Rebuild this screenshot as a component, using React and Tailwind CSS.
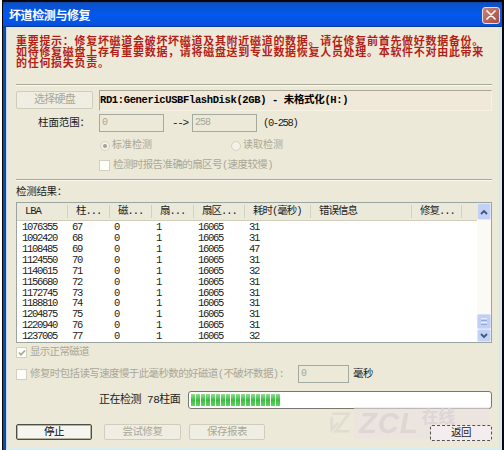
const columns = [
  { label: 'LBA', width: 'w-[51px]' },
  { label: '柱...', width: 'w-[42px]' },
  { label: '磁...', width: 'w-[42px]' },
  { label: '扇...', width: 'w-[42px]' },
  { label: '扇区...', width: 'w-[51px]' },
  { label: '耗时(毫秒)', width: 'w-[66px]' },
  { label: '错误信息', width: 'w-[101px]' },
  { label: '修复...', width: 'w-[50px]' },
]

const rows = [
  [1076355, 67, 0, 1, 16065, 31],
  [1092420, 68, 0, 1, 16065, 31],
  [1108485, 69, 0, 1, 16065, 47],
  [1124550, 70, 0, 1, 16065, 31],
  [1140615, 71, 0, 1, 16065, 32],
  [1156680, 72, 0, 1, 16065, 31],
  [1172745, 73, 0, 1, 16065, 31],
  [1188810, 74, 0, 1, 16065, 31],
  [1204875, 75, 0, 1, 16065, 31],
  [1220940, 76, 0, 1, 16065, 31],
  [1237005, 77, 0, 1, 16065, 32],
]

function TitleBar() {
  return (
    <div className="flex h-[24px] shrink-0 items-center justify-between rounded-t-[5px] bg-gradient-to-b from-[#0a50c8] via-[#0458ee] to-[#0450dc] pl-[6px] pr-[2px] shadow-[inset_0_-1px_0_#063a9c]">
      <span className="pt-[3px] text-[12px] font-bold leading-none tracking-[-0.4px] text-white">坏道检测与修复</span>
      <button className="flex h-[17px] w-[18px] items-center justify-center rounded-[3px] border border-[#e6dcec] bg-gradient-to-br from-[#c98378] to-[#a34e42]">
        <svg viewBox="0 0 10 10" className="h-[10px] w-[10px]" stroke="#fff6ee" strokeWidth="1.7" strokeLinecap="round">
          <path d="M1 1l8 8M9 1l-8 8" />
        </svg>
      </button>
    </div>
  )
}

function Divider() {
  return <div className="h-[2px] shrink-0 border-b border-t border-b-[#fbfaf2] border-t-[#aaa899]" />
}

function XpButton({ children, className }) {
  return (
    <button className={`flex shrink-0 items-center justify-center rounded-[2px] border ${className}`}>
      {children}
    </button>
  )
}

function Field({ children, className }) {
  return (
    <div className={`flex h-[18px] shrink-0 items-center border border-[#a3aaa0] pl-[2px] text-[#aaa797] ${className}`}>
      {children}
    </div>
  )
}

function Radio({ checked }) {
  return (
    <span className="flex h-[10px] w-[10px] shrink-0 items-center justify-center rounded-full border border-[#d6d2c2] bg-[#f4f2e8]">
      {checked && <span className="h-[4px] w-[4px] rounded-full bg-[#a5a294]" />}
    </span>
  )
}

function Checkbox({ checked }) {
  return (
    <span className="flex h-[11px] w-[11px] shrink-0 items-center justify-center border border-[#d3d0c0] bg-[#fdfdfa]">
      {checked && (
        <svg viewBox="0 0 8 8" className="h-[8px] w-[8px]" fill="none" stroke="#aaa799" strokeWidth="1.7">
          <path d="M1 3.5l2 2.3L7 1.5" />
        </svg>
      )}
    </span>
  )
}

function ScrollBar() {
  return (
    <div className="flex w-[14px] shrink-0 flex-col bg-[#fbfaf5]">
      <div className="flex h-[17px] items-center justify-center rounded-[2px] border border-[#dfe7fb] bg-[#c3d1f7]">
        <svg viewBox="0 0 8 6" className="h-[6px] w-[8px]" fill="none" stroke="#40557f" strokeWidth="1.8">
          <path d="M1 5l3-3 3 3" />
        </svg>
      </div>
      <div className="flex-1" />
      <div className="flex h-[15px] flex-col items-center justify-center gap-px rounded-[2px] border border-[#d4def8] bg-[#bfcff7]">
        <span className="h-px w-[6px] bg-[#e6edfd]" />
        <span className="h-px w-[6px] bg-[#93a9df]" />
        <span className="h-px w-[6px] bg-[#e6edfd]" />
        <span className="h-px w-[6px] bg-[#93a9df]" />
      </div>
      <div className="flex h-[13px] items-center justify-center rounded-[2px] border border-[#dfe7fb] bg-[#c3d1f7]">
        <svg viewBox="0 0 8 6" className="h-[6px] w-[8px]" fill="none" stroke="#40557f" strokeWidth="1.8">
          <path d="M1 1l3 3 3-3" />
        </svg>
      </div>
    </div>
  )
}

function ResultTable() {
  return (
    <div className="flex h-[141px] shrink-0 border border-[#9aa5a0] bg-white">
      <div className="flex min-w-0 flex-1 flex-col">
        <div className="mb-px flex h-[18px] shrink-0 items-center border-b border-[#d2cebb] bg-[#ebe9da]">
          {columns.map((col, i) => (
            <div
              key={i}
              className={`${col.width} flex h-[13px] shrink-0 items-center whitespace-nowrap border-r border-[#d3d0c0] pl-[8px] text-[10.5px]`}
            >
              {col.label}
            </div>
          ))}
        </div>
        {rows.map((row) => (
          <div key={row[0]} className="flex h-[10.9px] shrink-0 items-center">
            {row.map((cell, i) => (
              <div key={i} className={`${columns[i].width} shrink-0 text-[10.5px] tracking-[-1.3px] ${i ? 'pl-[4px]' : 'pl-[5px]'}`}>
                {cell}
              </div>
            ))}
          </div>
        ))}
      </div>
      <ScrollBar />
    </div>
  )
}

function Progress() {
  return (
    <div className="flex h-[18px] w-[304px] shrink-0 items-center gap-px rounded-[3px] border border-[#77796f] bg-white pl-[2px]">
      {Array.from({ length: 18 }, (_, i) => (
        <span key={i} className="h-[12px] w-[4px] bg-gradient-to-b from-[#8fe08f] via-[#35bd3d] to-[#62d166]" />
      ))}
    </div>
  )
}

function Watermark() {
  return (
    <div className="pointer-events-none absolute bottom-[9px] right-[10px] flex h-[32px] w-[160px] items-center">
      <svg viewBox="0 0 30 30" className="h-[28px] w-[25px]" fill="none" stroke="#e0dccf" strokeWidth="3">
        <path d="M4 4h20L8 25h17M3 8v15l8-8" />
      </svg>
      <span className="flex h-full flex-1 items-start bg-[#ede2e4]/60 pl-[5px] font-['Liberation_Sans'] text-[29px] font-bold italic leading-[32px] tracking-[1px] text-[#ddd6d5]">
        ZCL
        <span className="pl-[3px] font-['Noto_Sans_CJK_SC'] text-[17px] not-italic leading-[17px] tracking-[0px] text-[#ddd5da]">
          在线
        </span>
      </span>
    </div>
  )
}

export default function App() {
  return (
    <div className="h-[450px] w-[504px] overflow-hidden bg-white pl-[2px] font-['Liberation_Mono','Noto_Sans_CJK_SC',monospace] text-[10px] leading-none tracking-[-1px] text-[#1c1c1a]">
      <div className="flex h-full flex-col border-l border-r-2 border-t-2 border-[#06060c] bg-[#1247a8] pt-px">
        <TitleBar />
        <div className="relative ml-[3px] flex min-h-0 flex-1 flex-col border-b-2 border-l border-r-[3px] border-b-[#d9edf0] border-l-[#c5d8ee] border-r-[#d8e9ee] bg-[#ece9d8] pl-[9px] pr-[7px]">
          <div className="mt-[10px] h-[47px] shrink-0 whitespace-nowrap text-[11px] font-bold leading-[11px] tracking-[0.7px] text-[#b51f16]">
            <div>重要提示：修复坏磁道会破坏坏磁道及其附近磁道的数据。请在修复前首先做好数据备份。</div>
            <div>如待修复磁盘上存有重要数据，请将磁盘送到专业数据恢复人员处理。本软件不对由此带来</div>
            <div>的任何损失负责。</div>
          </div>
          <Divider />

          <div className="mt-[4px] flex h-[21px] shrink-0">
            <XpButton className="mr-[6px] mt-px h-[18px] w-[77px] border-[#d0cdbc] bg-[#f0eee2] pt-px text-[11px] tracking-[-0.8px] text-[#aaa797]">
              选择硬盘
            </XpButton>
            <div className="flex flex-1 items-center whitespace-pre border border-b-[#f7f3e4] border-l-[#aaa899] border-r-[#f7f3e4] border-t-[#aaa899] bg-[#f0e8d9] text-[10.5px] font-bold tracking-[-0.37px] text-black">
              RD1:GenericUSBFlashDisk(2GB) - 未格式化(H:)
            </div>
          </div>

          <div className="mt-[3px] flex h-[18px] shrink-0 items-center">
            <span className="w-[83px] whitespace-nowrap pl-[22px] text-[10.5px] tracking-[-0.1px]">柱面范围：</span>
            <Field className="w-[65px]">0</Field>
            <span className="w-[28px] pl-[8px] text-[11px] tracking-[-1.4px]">--&gt;</span>
            <Field className="w-[65px]">258</Field>
            <span className="pl-[6px] text-[10.5px] tracking-[-1.4px]">(0-258)</span>
          </div>

          <div className="mt-[6px] flex h-[16px] shrink-0 items-center pl-[84px] tracking-normal text-[#aaa797]">
            <Radio checked />
            <span className="w-[121px] pl-[2px]">标准检测</span>
            <Radio />
            <span className="pl-[2px]">读取检测</span>
          </div>

          <div className="mt-[4px] flex h-[14px] shrink-0 items-center whitespace-nowrap pl-[83px] text-[#aaa797]">
            <Checkbox />
            <span className="pl-[3px] text-[10.5px] tracking-[-0.6px]">检测时报告准确的扇区号(速度较慢)</span>
          </div>

          <div className="h-[7px] shrink-0" />
          <Divider />

          <div className="flex h-[21px] shrink-0 items-center pt-[2px] text-[10.5px] tracking-[-0.3px]">检测结果：</div>
          <ResultTable />

          <div className="mt-[3px] flex h-[13px] shrink-0 items-center text-[#aaa797]">
            <Checkbox checked />
            <span className="pl-[3px] text-[10.5px] tracking-[-0.7px]">显示正常磁道</span>
          </div>

          <div className="mt-[6px] flex h-[18px] shrink-0 items-center whitespace-nowrap text-[#aaa797]">
            <Checkbox />
            <span className="w-[271px] pl-[3px] text-[10.5px] tracking-[-0.62px]">
              修复时包括读写速度慢于此毫秒数的好磁道(不破坏数据):
            </span>
            <Field className="w-[51px]">0</Field>
            <span className="pl-[4px] text-[10.5px] tracking-[-0.5px] text-[#1c1c1a]">毫秒</span>
          </div>

          <div className="mt-[8px] flex h-[18px] shrink-0 items-center">
            <span className="w-[173px] whitespace-pre pl-[83px] text-[11px] tracking-[-0.5px]">正在检测 78柱面</span>
            <Progress />
          </div>

          <div className="mt-[15px] flex h-[16px] shrink-0 text-[10.5px] tracking-[-0.5px]">
            <XpButton className="mr-[12px] w-[76px] border-[#4b4f45] bg-[#f6f5ef] text-black shadow-[inset_0_0_0_1px_#b3b4a2]">
              停止
            </XpButton>
            <XpButton className="mr-[8px] w-[77px] border-[#d0cdbc] bg-[#f0eee2] text-[#aaa797]">尝试修复</XpButton>
            <XpButton className="w-[76px] border-[#d0cdbc] bg-[#f0eee2] text-[#aaa797]">保存报表</XpButton>
          </div>

          <Watermark />
          <XpButton className="absolute bottom-[7px] right-[7px] h-[16px] w-[62px] border-dashed border-[#55534f] bg-[#f4edf0] text-[10.5px] tracking-[-0.5px]">
            返回
          </XpButton>
        </div>
      </div>
    </div>
  )
}
